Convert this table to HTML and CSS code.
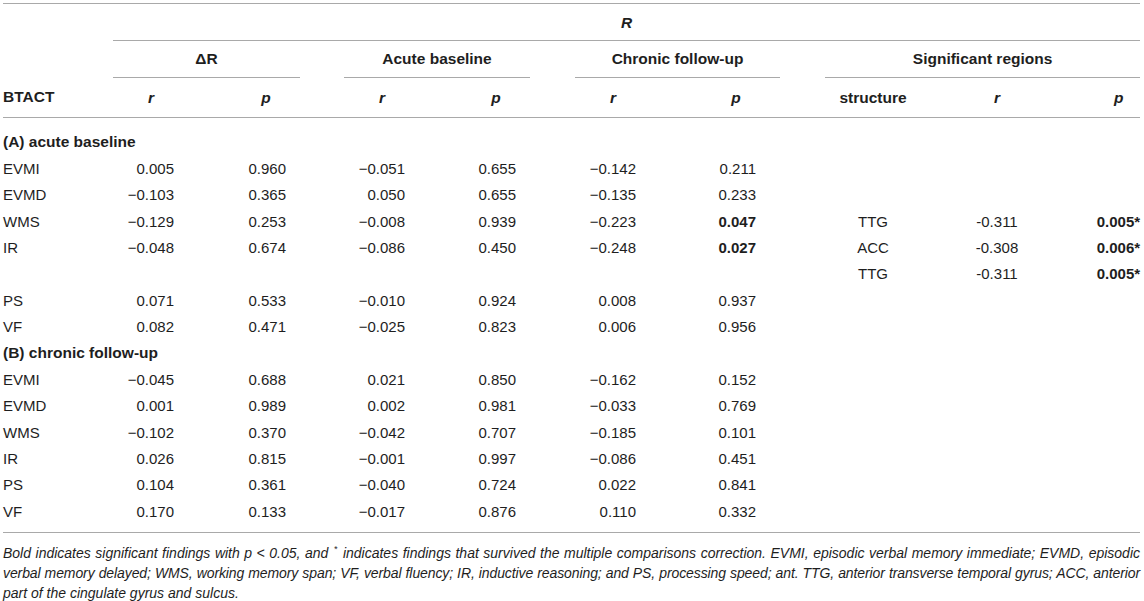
FILE: index.html
```html
<!DOCTYPE html>
<html lang="en">
<head>
<meta charset="utf-8">
<title>BTACT correlations</title>
<link rel="stylesheet" href="styles.css">
</head>
<body>
<div class="wrap">
<table class="tbl">
  <colgroup>
    <col class="w-label">
    <col class="w-r"><col class="w-p">
    <col class="w-gap1">
    <col class="w-r"><col class="w-p2">
    <col class="w-gap2">
    <col class="w-r"><col class="w-p3">
    <col class="w-gap2">
    <col class="w-struct"><col class="w-sr"><col class="w-sp">
  </colgroup>
  <thead>
    <tr class="h1">
      <th></th>
      <th colspan="12" class="grp"><i>R</i></th>
    </tr>
    <tr class="h2">
      <th></th>
      <th colspan="2" class="grp">ΔR</th>
      <th></th>
      <th colspan="2" class="grp">Acute baseline</th>
      <th></th>
      <th colspan="2" class="grp">Chronic follow-up</th>
      <th></th>
      <th colspan="3" class="grp">Significant regions</th>
    </tr>
    <tr class="h3">
      <th class="lbl">BTACT</th>
      <th class="r"><span class="hd hd-r">r</span></th>
      <th class="p"><span class="hd hd-p">p</span></th>
      <th></th>
      <th class="r"><span class="hd hd-r">r</span></th>
      <th class="p"><span class="hd hd-p">p</span></th>
      <th></th>
      <th class="r"><span class="hd hd-r">r</span></th>
      <th class="p p3"><span class="hd hd-p">p</span></th>
      <th></th>
      <th class="s">structure</th>
      <th class="sr"><i>r</i></th>
      <th class="sp"><span class="hd hd-sp">p</span></th>
    </tr>
  </thead>
  <tbody>
    <tr class="sec first"><td colspan="13">(A) acute baseline</td></tr>
    <tr><td class="lbl">EVMI</td><td class="r">0.005</td><td class="p">0.960</td><td></td><td class="r">−0.051</td><td class="p">0.655</td><td></td><td class="r">−0.142</td><td class="p p3">0.211</td><td></td><td class="s"></td><td class="sr"></td><td class="sp"></td></tr>
    <tr><td class="lbl">EVMD</td><td class="r">−0.103</td><td class="p">0.365</td><td></td><td class="r">0.050</td><td class="p">0.655</td><td></td><td class="r">−0.135</td><td class="p p3">0.233</td><td></td><td class="s"></td><td class="sr"></td><td class="sp"></td></tr>
    <tr><td class="lbl">WMS</td><td class="r">−0.129</td><td class="p">0.253</td><td></td><td class="r">−0.008</td><td class="p">0.939</td><td></td><td class="r">−0.223</td><td class="p p3"><b>0.047</b></td><td></td><td class="s">TTG</td><td class="sr">-0.311</td><td class="sp"><b>0.005*</b></td></tr>
    <tr><td class="lbl">IR</td><td class="r">−0.048</td><td class="p">0.674</td><td></td><td class="r">−0.086</td><td class="p">0.450</td><td></td><td class="r">−0.248</td><td class="p p3"><b>0.027</b></td><td></td><td class="s">ACC</td><td class="sr">-0.308</td><td class="sp"><b>0.006*</b></td></tr>
    <tr><td class="lbl"></td><td class="r"></td><td class="p"></td><td></td><td class="r"></td><td class="p"></td><td></td><td class="r"></td><td class="p p3"></td><td></td><td class="s">TTG</td><td class="sr">-0.311</td><td class="sp"><b>0.005*</b></td></tr>
    <tr><td class="lbl">PS</td><td class="r">0.071</td><td class="p">0.533</td><td></td><td class="r">−0.010</td><td class="p">0.924</td><td></td><td class="r">0.008</td><td class="p p3">0.937</td><td></td><td class="s"></td><td class="sr"></td><td class="sp"></td></tr>
    <tr><td class="lbl">VF</td><td class="r">0.082</td><td class="p">0.471</td><td></td><td class="r">−0.025</td><td class="p">0.823</td><td></td><td class="r">0.006</td><td class="p p3">0.956</td><td></td><td class="s"></td><td class="sr"></td><td class="sp"></td></tr>
    <tr class="sec"><td colspan="13">(B) chronic follow-up</td></tr>
    <tr><td class="lbl">EVMI</td><td class="r">−0.045</td><td class="p">0.688</td><td></td><td class="r">0.021</td><td class="p">0.850</td><td></td><td class="r">−0.162</td><td class="p p3">0.152</td><td></td><td class="s"></td><td class="sr"></td><td class="sp"></td></tr>
    <tr><td class="lbl">EVMD</td><td class="r">0.001</td><td class="p">0.989</td><td></td><td class="r">0.002</td><td class="p">0.981</td><td></td><td class="r">−0.033</td><td class="p p3">0.769</td><td></td><td class="s"></td><td class="sr"></td><td class="sp"></td></tr>
    <tr><td class="lbl">WMS</td><td class="r">−0.102</td><td class="p">0.370</td><td></td><td class="r">−0.042</td><td class="p">0.707</td><td></td><td class="r">−0.185</td><td class="p p3">0.101</td><td></td><td class="s"></td><td class="sr"></td><td class="sp"></td></tr>
    <tr><td class="lbl">IR</td><td class="r">0.026</td><td class="p">0.815</td><td></td><td class="r">−0.001</td><td class="p">0.997</td><td></td><td class="r">−0.086</td><td class="p p3">0.451</td><td></td><td class="s"></td><td class="sr"></td><td class="sp"></td></tr>
    <tr><td class="lbl">PS</td><td class="r">0.104</td><td class="p">0.361</td><td></td><td class="r">−0.040</td><td class="p">0.724</td><td></td><td class="r">0.022</td><td class="p p3">0.841</td><td></td><td class="s"></td><td class="sr"></td><td class="sp"></td></tr>
    <tr class="last"><td class="lbl">VF</td><td class="r">0.170</td><td class="p">0.133</td><td></td><td class="r">−0.017</td><td class="p">0.876</td><td></td><td class="r">0.110</td><td class="p p3">0.332</td><td></td><td class="s"></td><td class="sr"></td><td class="sp"></td></tr>
  </tbody>
</table>
<p class="note"><span class="nl nl-full">Bold indicates significant findings with p &lt; 0.05, and <sup>*</sup> indicates findings that survived the multiple comparisons correction. EVMI, episodic verbal memory immediate; EVMD, episodic</span><span class="nl nl-full nl-tight">verbal memory delayed; WMS, working memory span; VF, verbal fluency; IR, inductive reasoning; and PS, processing speed; ant. TTG, anterior transverse temporal gyrus; ACC, anterior</span><span class="nl">part of the cingulate gyrus and sulcus.</span></p>
</div>
</body>
</html>
```

FILE: styles.css
```css
html, body {
  margin: 0;
  padding: 0;
  background: #ffffff;
}

body {
  font-family: "Liberation Sans", Arial, Helvetica, sans-serif;
  color: #1e1e1e;
}

.wrap {
  padding: 3px 4px 0 3px;
  width: 1137px;
}

.tbl {
  width: 1137px;
  table-layout: fixed;
  border-collapse: collapse;
  border-top: 1px solid #a9a9a9;
  font-size: 15px;
}

.w-label { width: 110px; }
.w-r { width: 80px; }
.w-p { width: 107px; }
.w-p2 { width: 106px; }
.w-p3 { width: 125px; }
.w-gap1 { width: 44px; }
.w-gap2 { width: 45px; }
.w-struct { width: 96px; }
.w-sr { width: 152px; }
.w-sp { width: 67px; }

th, td {
  padding: 0;
  white-space: nowrap;
}

th {
  font-weight: bold;
  font-size: 15.5px;
  vertical-align: middle;
}

.h1 th {
  height: 34px;
  padding-top: 2px;
}
.h2 th { height: 36px; }
.h3 th {
  height: 39px;
  border-bottom: 1px solid #a9a9a9;
}

.grp {
  text-align: center;
  border-bottom: 1px solid #a9a9a9;
}

.lbl { text-align: left; }

.r {
  text-align: right;
  padding-right: 19px;
}

.p {
  text-align: right;
  padding-right: 14px;
}

.p3 { padding-right: 24px; }

.s, .sr { text-align: center; }

.sp {
  text-align: right;
  padding-right: 0;
}

.hd {
  display: inline-block;
  text-align: center;
  font-style: italic;
}

.hd-r { width: 46px; }
.hd-p { width: 40px; }
.hd-sp { width: 43px; }

tbody td {
  height: 26.36px;
  vertical-align: middle;
}

tbody .first td {
  padding-top: 11px;
}

tbody .sec td {
  font-weight: bold;
  font-size: 15.5px;
}

tbody .last td {
  padding-bottom: 8px;
  border-bottom: 1px solid #a9a9a9;
}

.note {
  margin: 10px 0 0 0;
  font-size: 14px;
  line-height: 20px;
  font-style: italic;
}

.nl {
  display: block;
}

.nl-full {
  text-align: justify;
  text-align-last: justify;
}

.nl-tight {
  letter-spacing: -0.1px;
  word-spacing: -0.4px;
}

.note sup {
  font-size: 9px;
  line-height: 1;
  vertical-align: 6px;
  margin: 0 1px;
}
```
